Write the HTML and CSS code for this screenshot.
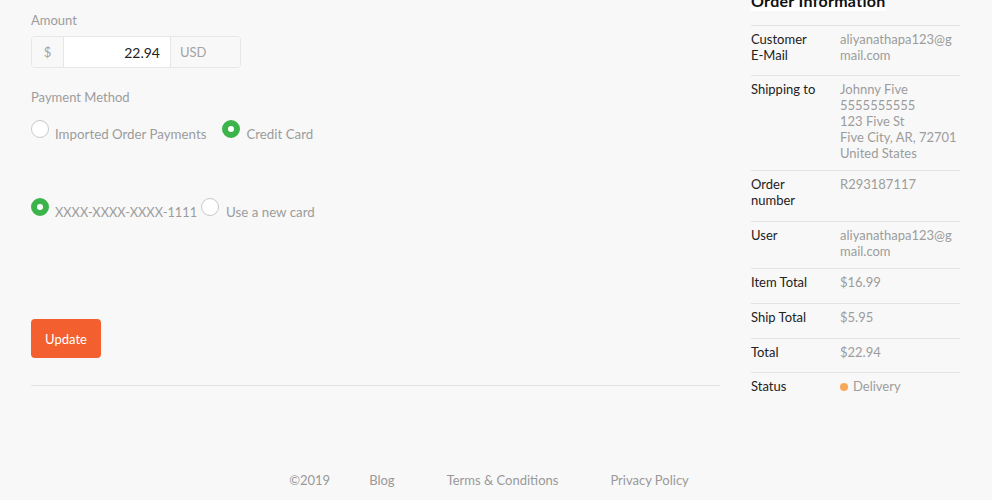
FILE: index.html
```html
<!DOCTYPE html>
<html>
<head>
<meta charset="utf-8">
<link rel="stylesheet" href="styles.css">
</head>
<body>
<div class="page">
  <main class="main">
    <section class="left">
      <div class="field-label">Amount</div>
      <div class="input-group">
        <span class="addon addon-left">$</span>
        <span class="amount-input">22.94</span>
        <span class="addon addon-right">USD</span>
      </div>
      <div class="field-label pm-label">Payment Method</div>
      <div class="radio-row row-methods">
        <label class="radio"><span class="dot"></span><span class="radio-text">Imported Order Payments</span></label>
        <label class="radio radio-gap"><span class="dot checked"></span><span class="radio-text">Credit Card</span></label>
      </div>
      <div class="radio-row row-cards">
        <label class="radio"><span class="dot checked"></span><span class="radio-text card-num">XXXX-XXXX-XXXX-1111</span></label>
        <label class="radio radio-tight"><span class="dot"></span><span class="radio-text">Use a new card</span></label>
      </div>
      <button class="btn">Update</button>
      <hr class="divider">
    </section>
    <aside class="right">
      <h4 class="heading"><span class="heading-text">Order Information</span></h4>
      <div class="info">
        <div class="info-row first"><div class="k">Customer E-Mail</div><div class="v">aliyanathapa123@gmail.com</div></div>
        <div class="info-row tight"><div class="k">Shipping to</div><div class="v">Johnny Five<br>5555555555<br>123 Five St<br>Five City, AR, 72701<br>United States</div></div>
        <div class="info-row"><div class="k">Order number</div><div class="v">R293187117</div></div>
        <div class="info-row tight"><div class="k">User</div><div class="v">aliyanathapa123@gmail.com</div></div>
        <div class="info-row"><div class="k">Item Total</div><div class="v">$16.99</div></div>
        <div class="info-row"><div class="k">Ship Total</div><div class="v">$5.95</div></div>
        <div class="info-row short"><div class="k">Total</div><div class="v">$22.94</div></div>
        <div class="info-row last"><div class="k">Status</div><div class="v"><span class="status-dot"></span>Delivery</div></div>
      </div>
    </aside>
  </main>
  <footer class="footer">
    <span class="copy">©2019</span>
    <a class="flink">Blog</a>
    <a class="flink">Terms &amp; Conditions</a>
    <a class="flink">Privacy Policy</a>
  </footer>
</div>
</body>
</html>
```

FILE: styles.css
```css
* { box-sizing: border-box; }
html, body { margin: 0; padding: 0; }
body {
  background: #f8f8f8;
  font-family: Lato, "Open Sans", sans-serif;
  font-size: 13px;
  color: #999;
  overflow: hidden;
  height: 500px;
}
.page { display: flex; flex-direction: column; }
.main {
  display: flex;
  align-items: flex-start;
  margin-top: -9px;
  padding-left: 31px;
}
.left {
  width: 689px;
  padding-top: 21px;
}
.right {
  width: 209px;
  margin-left: 31px;
}
.field-label {
  font-size: 13px;
  line-height: 16px;
  color: #9c9c9c;
}
.input-group {
  display: flex;
  width: 210px;
  height: 32px;
  margin-top: 8px;
  border: 1px solid #e6e6e6;
  border-radius: 4px;
  overflow: hidden;
  font-size: 13px;
}
.addon {
  display: flex;
  align-items: center;
  background: #f8f8f8;
  color: #a3a3a3;
}
.addon-left { width: 32px; justify-content: center; border-right: 1px solid #e6e6e6; }
.addon-right { flex: 1; padding-left: 9px; border-left: 1px solid #e6e6e6; }
.amount-input {
  width: 106px;
  background: #fff;
  color: #222;
  display: flex;
  align-items: center;
  justify-content: flex-end;
  padding-right: 10px;
  font-size: 14px;
}
.pm-label { margin-top: 21px; }
.radio-row { display: flex; align-items: flex-start; }
.row-methods { margin-top: 15px; }
.row-cards { margin-top: 56px; }
.radio { display: flex; align-items: flex-start; cursor: pointer; }
.radio-gap { margin-left: 16px; }
.radio-tight { margin-left: 4px; }
.dot {
  width: 18px;
  height: 18px;
  border-radius: 50%;
  border: 1px solid #c9c9c9;
  background: #fff;
  flex: none;
}
.dot.checked {
  border: 6px solid #3cb44b;
  background: #fff;
}
.radio-text {
  margin-left: 6px;
  padding-top: 6px;
  font-size: 13.3px;
  line-height: 16px;
  color: #9c9c9c;
}
.radio-text.card-num { font-size: 12.8px; }
.radio-tight .radio-text { margin-left: 7px; }
.btn {
  display: block;
  margin-top: 99px;
  width: 70px;
  height: 39px;
  border: none;
  border-radius: 4px;
  background: #f45f2f;
  color: #fff;
  font-family: Lato, sans-serif;
  font-size: 13px;
  padding: 0;
}
.divider {
  margin: 27px 0 0;
  border: none;
  border-top: 1px solid #e4e4e4;
  height: 0;
}
.heading {
  margin: 0 0 14px;
  font-size: 16px;
  line-height: 20px;
  font-weight: 700;
  color: #111;
  letter-spacing: 0.3px;
}
.heading-text { background: #fff; display: inline-block; }
.info-row {
  display: flex;
  border-top: 1px solid #e4e4e4;
  padding: 5px 0 13px;
  line-height: 16px;
  font-size: 13px;
}
.info-row.first { padding-bottom: 12px; }
.info-row.tight { padding-bottom: 9px; }
.info-row.short { padding-bottom: 12px; }
.info-row.last { padding-bottom: 0; }
.k { width: 89px; flex: none; color: #222; padding-right: 22px; }
.v { flex: 1; color: #9c9c9c; word-break: break-all; }
.status-dot {
  display: inline-block;
  width: 8px;
  height: 8px;
  border-radius: 50%;
  background: #f9a85b;
  margin-right: 5px;
  vertical-align: 0;
}
.footer {
  display: flex;
  justify-content: center;
  gap: 52px;
  margin-top: 78px;
  padding-right: 14px;
  font-size: 13px;
  line-height: 16px;
  color: #999;
}
.copy { margin-right: -13px; }
.flink { color: #999; text-decoration: none; }
```
